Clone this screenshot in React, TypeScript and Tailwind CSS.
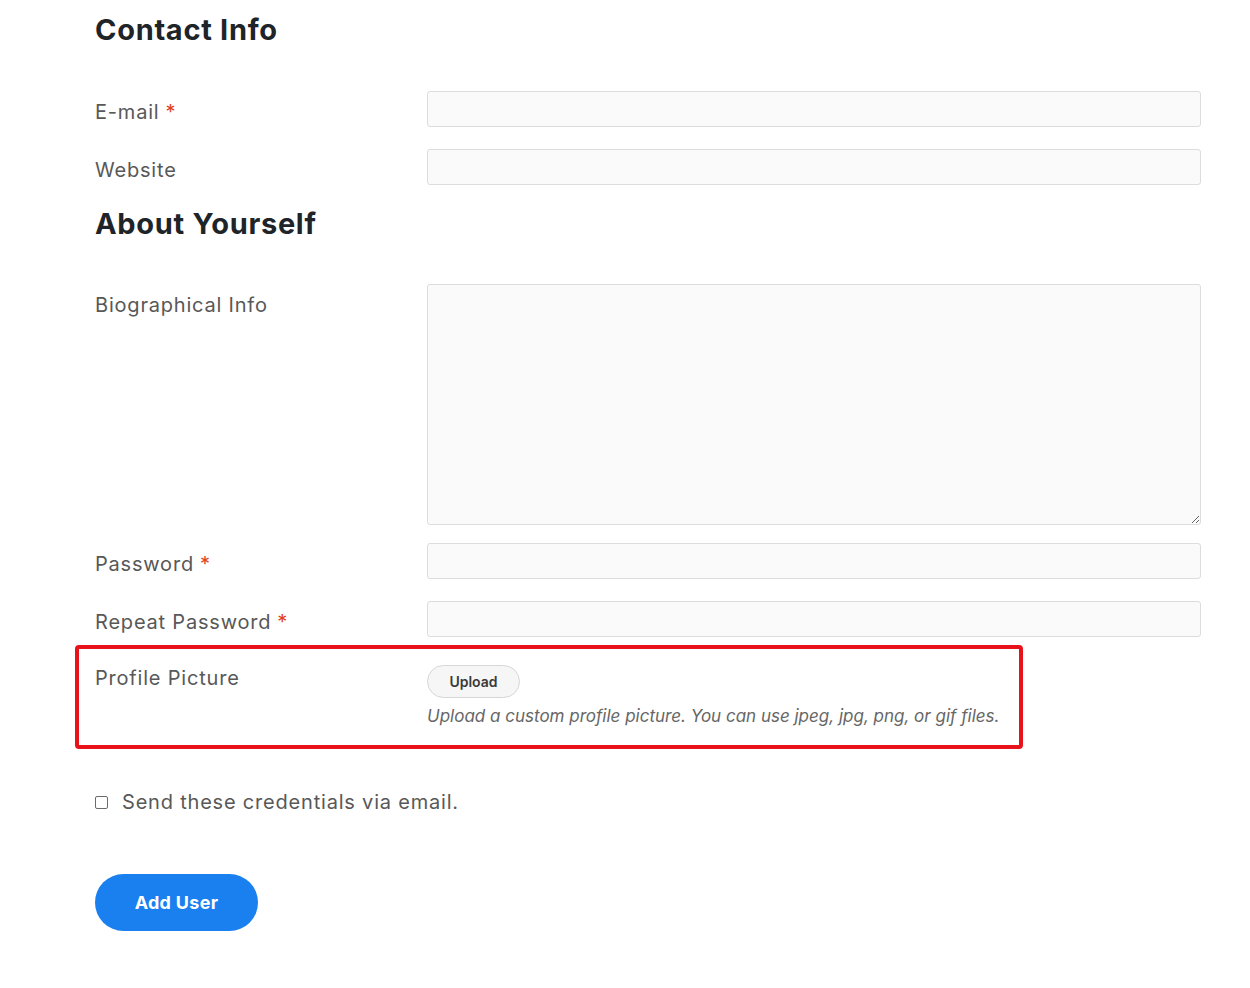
import { ReactNode } from 'react'

const heading = "font-['Inter',sans-serif] font-bold text-[#1e2428] tracking-[0.7px]"
const labelFont = "font-['Inter',sans-serif] text-[20px] text-[#585858] tracking-[0.8px]"
const labelCls = `w-[332px] shrink-0 pt-[6px] leading-[30px] ${labelFont}`
const inputCls = 'flex-1 h-[36px] rounded-[3px] border border-[#dcdcdc] bg-[#fafafa]'

function Req() {
  return <span className="ml-[6px] text-[#e2401c]">*</span>
}

function Row({ label, required, className = '', children }: { label: string; required?: boolean; className?: string; children?: ReactNode }) {
  return (
    <div className={`flex items-start ${className}`}>
      <label className={labelCls}>
        {label}
        {required && <Req />}
      </label>
      {children ?? <input className={inputCls} />}
    </div>
  )
}

export default function App() {
  return (
    <div className="min-h-[988px] bg-white pl-[95px] pr-[49px] pt-[12px]">
      <h2 className={`${heading} text-[29px] leading-[36px]`}>Contact Info</h2>

      <Row label="E-mail" required className="mt-[43px]" />
      <Row label="Website" className="mt-[22px]" />

      <h2 className={`${heading} text-[29px] leading-[36px] mt-[21px]`}>About Yourself</h2>

      <Row label="Biographical Info" className="mt-[42px]">
        <textarea className="flex-1 h-[241px] rounded-[3px] border border-[#dcdcdc] bg-[#fafafa] resize-y" />
      </Row>

      <Row label="Password" required className="mt-[18px]" />
      <Row label="Repeat Password" required className="mt-[22px]" />

      <div className="ml-[-20px] mt-[8px] w-[948px] rounded-[4px] border-4 border-[#e8121b] pl-[16px] pt-[16px] pb-[17px]">
        <div className="flex items-start">
          <label className={`w-[332px] shrink-0 leading-[26px] ${labelFont}`}>Profile Picture</label>
          <div className="flex flex-col items-start">
            <button className="h-[33px] w-[93px] rounded-full border border-[#d6d6d6] bg-[#f6f6f6] font-['Inter',sans-serif] text-[14px] font-semibold text-[#3a3a3a]">
              Upload
            </button>
            <p className="mt-[6px] font-['Inter',sans-serif] text-[17px] italic leading-[24px] text-[#666]">
              Upload a custom profile picture. You can use jpeg, jpg, png, or gif files.
            </p>
          </div>
        </div>
      </div>

      <label className="mt-[39px] flex items-center gap-[14px]">
        <input
          type="checkbox"
          className="h-[13px] w-[13px] appearance-none rounded-[2px] border border-[#6b6b6b] bg-white"
        />
        <span className={`leading-[28px] ${labelFont}`}>Send these credentials via email.</span>
      </label>

      <button className="mt-[58px] h-[57px] w-[163px] rounded-full bg-[#1a80ef] font-['Inter',sans-serif] text-[18px] font-bold text-white tracking-[0.3px]">
        Add User
      </button>
    </div>
  )
}
